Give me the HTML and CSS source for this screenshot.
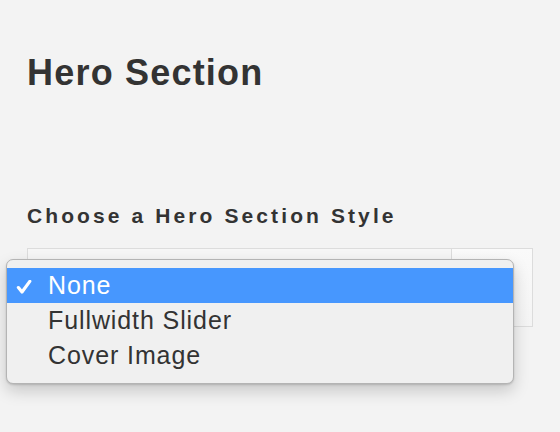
FILE: index.html
```html
<!DOCTYPE html>
<html lang="en">
<head>
<meta charset="utf-8">
<title>Hero Section</title>
<link rel="stylesheet" href="styles.css">
</head>
<body>
<main class="page">
  <h1 class="title">Hero Section</h1>
  <label class="field-label">Choose a Hero Section Style</label>
  <div class="select-wrap">
    <div class="select">
      <div class="select-value"></div>
      <div class="select-arrow"></div>
    </div>
    <ul class="menu">
      <li class="menu-item selected">
        <span class="check"><svg width="16" height="14" viewBox="0 0 16 14"><path d="M2.4 7.6 L6 12 L13.8 1.4" fill="none" stroke="#fff" stroke-width="3.2" stroke-linecap="round" stroke-linejoin="round"/></svg></span>
        <span class="item-text">None</span>
      </li>
      <li class="menu-item">
        <span class="check"></span>
        <span class="item-text">Fullwidth Slider</span>
      </li>
      <li class="menu-item">
        <span class="check"></span>
        <span class="item-text">Cover Image</span>
      </li>
    </ul>
  </div>
</main>
</body>
</html>
```
FILE: styles.css
```css
html, body {
  margin: 0;
  padding: 0;
  background: #f3f3f3;
}
body {
  font-family: "Liberation Sans", Arial, Helvetica, sans-serif;
  color: #333;
}
.page {
  box-sizing: border-box;
  min-height: 432px;
  padding: 51px 0 0 27px;
}
.title {
  margin: 0;
  font-size: 36px;
  line-height: 44px;
  font-weight: bold;
  letter-spacing: 1.2px;
  color: #333;
}
.field-label {
  display: block;
  margin-top: 109px;
  font-size: 21px;
  line-height: 24px;
  font-weight: bold;
  letter-spacing: 3.1px;
  color: #333;
}
.select-wrap {
  position: relative;
  margin-top: 20px;
  width: 506px;
}
.select {
  display: flex;
  height: 77px;
  border: 1px solid #dcdcdc;
  background: #f6f6f6;
}
.select-value {
  flex: 1;
  border-right: 1px solid #dcdcdc;
}
.select-arrow {
  width: 80px;
  background: linear-gradient(#fafafa, #f4f4f4);
}
.menu {
  position: absolute;
  left: -21px;
  top: 11px;
  width: 506px;
  margin: 0;
  padding: 8px 0 10px;
  list-style: none;
  background: #f0f0f0;
  border: 1px solid #b4b4b4;
  border-radius: 7px;
  box-shadow: 0 7px 16px rgba(0, 0, 0, 0.18), 0 1px 2px rgba(0, 0, 0, 0.15);
}
.menu-item {
  display: flex;
  align-items: center;
  height: 35px;
  font-size: 25px;
  line-height: 35px;
  letter-spacing: 0.9px;
  color: #333;
}
.menu-item.selected {
  background: #4797fe;
  color: #fff;
}
.check {
  display: flex;
  align-items: center;
  width: 41px;
  padding-left: 9px;
  box-sizing: border-box;
}
.check svg {
  display: block;
  margin-top: 2px;
}
```
